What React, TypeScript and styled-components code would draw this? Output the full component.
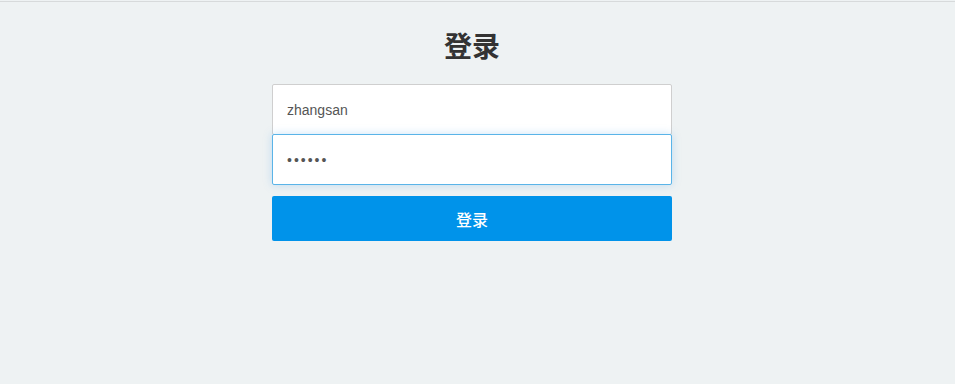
import React from "react";
import styled, { createGlobalStyle } from "styled-components";

const GlobalStyle = createGlobalStyle`
  html, body {
    margin: 0;
    padding: 0;
    background: #eef2f3;
    font-family: "Liberation Sans", "Noto Sans CJK SC", sans-serif;
  }
`;

export default function App() {
  return (
    <>
      <GlobalStyle />
      <Page>
        <LoginForm onSubmit={(e) => e.preventDefault()}>
          <Title>登录</Title>
          <Field type="text" defaultValue="zhangsan" />
          <Field type="password" defaultValue="123456" $focused />
          <SubmitButton type="submit">登录</SubmitButton>
        </LoginForm>
      </Page>
    </>
  );
}

const Page = styled.div`
  margin-top: 1px;
  border-top: 1px solid #d7dadb;
  min-height: 382px;
  box-sizing: border-box;
  padding-right: 11px;
  display: flex;
  justify-content: center;
`;

const LoginForm = styled.form`
  width: 400px;
  display: flex;
  flex-direction: column;
  padding-top: 31px;
`;

const Title = styled.h1`
  margin: 0 0 21px;
  height: 30px;
  line-height: 30px;
  text-align: center;
  font-size: 28px;
  font-weight: 700;
  color: #333;
`;

const Field = styled.input<{ $focused?: boolean }>`
  box-sizing: border-box;
  height: 51px;
  padding: 0 14px;
  font-family: inherit;
  font-size: 14px;
  color: #555;
  background: #fff;
  border: 1px solid ${(p) => (p.$focused ? "#5ab4e8" : "#cfcfcf")};
  border-radius: 2px;
  outline: none;
  position: relative;
  z-index: ${(p) => (p.$focused ? 1 : 0)};
  box-shadow: ${(p) =>
    p.$focused ? "0 0 8px rgba(102, 175, 233, 0.35)" : "none"};

  &[type="password"] {
    letter-spacing: 2px;
  }

  & + & {
    margin-top: -1px;
  }
`;

const SubmitButton = styled.button`
  margin-top: 11px;
  height: 45px;
  border: none;
  border-radius: 2px;
  background: #0093ea;
  color: #fff;
  font-family: inherit;
  font-size: 16px;
  font-weight: 500;
  cursor: pointer;
`;
